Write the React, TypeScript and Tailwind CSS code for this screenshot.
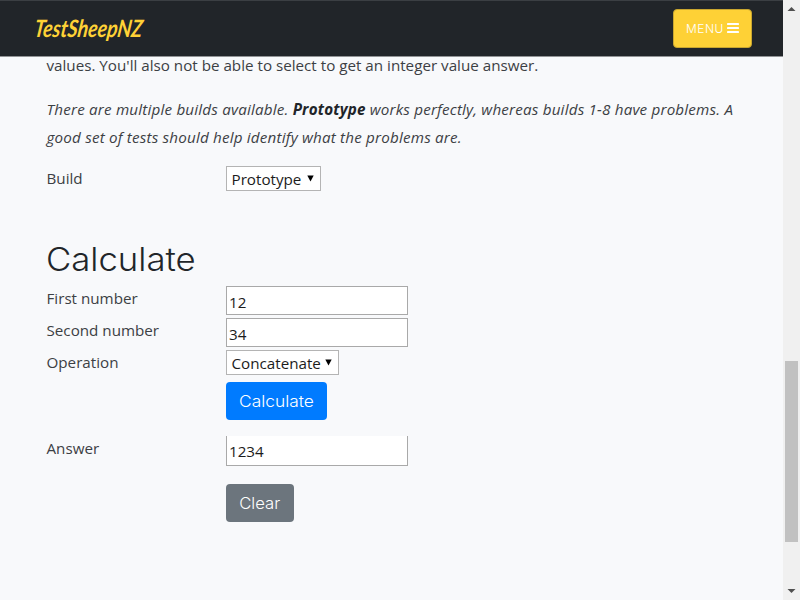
import type { ReactNode } from 'react';

const bodyFont = "font-['Open_Sans','Noto_Sans',sans-serif]";
const headingFont = "font-['Inter',sans-serif]";

function Row({ label, className, children }: { label?: string; className: string; children: ReactNode }) {
  return (
    <div className={`flex items-start ${className}`}>
      <div className="w-[179.5px] shrink-0 leading-6">{label}</div>
      {children}
    </div>
  );
}

function Select({ value, className }: { value: string; className: string }) {
  return (
    <button className={`flex h-[25px] items-center justify-between border border-[#b4b4b4] bg-white pr-[6px] pl-[4.5px] text-[#1c1c1c] ${className}`}>
      <span className="pt-px">{value}</span>
      <svg width="7" height="7" viewBox="0 0 7 7">
        <path d="M0.3 0.5h6.4L3.5 6.5z" fill="#000" />
      </svg>
    </button>
  );
}

function Field({ value, className }: { value: string; className: string }) {
  return (
    <input
      defaultValue={value}
      className={`w-[182px] border border-[#a9a9a9] bg-white pl-[2px] text-[15.2px] text-[#1c1c1c] outline-none ${className}`}
    />
  );
}

export default function App() {
  return (
    <div className={`flex h-[600px] w-[800px] overflow-hidden bg-[#f8f9fb] text-[15.2px] text-[#3c4044] ${bodyFont}`}>
      <div className="flex w-[783px] flex-col">
        <header className="z-10 flex h-[57px] shrink-0 items-center justify-between border-t border-b border-t-[#3b3f43] border-b-[#929496] bg-[#212529] pr-[31px] pl-[34px]">
          <svg width="112" height="34" viewBox="0 0 112 34" className="overflow-visible">
            <text
              x="3"
              y="25"
              textLength="108"
              lengthAdjust="spacingAndGlyphs"
              transform="skewX(-8)"
              fill="#fed136"
              className="font-['Lato',sans-serif] text-[24px] font-bold italic"
            >
              TestSheepNZ
            </text>
          </svg>
          <button className={`flex h-[39px] w-[79px] items-center justify-center rounded-[4px] border border-[#c9a62f] bg-[#fed136] text-[12px] font-light text-white ${headingFont}`}>
            <span className="tracking-[0.5px]">MENU</span>
            <svg width="12" height="10" viewBox="0 0 12 10" className="mb-[2px] ml-[3px]" fill="#fff">
              <rect width="12" height="2" rx="0.4" />
              <rect y="4" width="12" height="2" rx="0.4" />
              <rect y="8" width="12" height="2" rx="0.4" />
            </svg>
          </button>
        </header>
        <main className="-mt-[6px] pl-[46.5px]">
          <p className="leading-7 whitespace-nowrap">values. You'll also not be able to select to get an integer value answer.</p>
          <p className="mt-4 leading-7 tracking-[0.19px] whitespace-nowrap italic">
            There are multiple builds available. <b className="font-bold text-[#212529]">Prototype</b> works perfectly, whereas builds 1-8 have problems. A<br />
            good set of tests should help identify what the problems are.
          </p>
          <Row label="Build" className="mt-[15px] h-[73px]">
            <Select value="Prototype" className="w-[95px]" />
          </Row>
          <h2 className={`-ml-px h-[47px] w-fit origin-left scale-x-[1.085] pt-px text-[32px] leading-[40px] font-light text-[#212529] ${headingFont}`}>Calculate</h2>
          <Row label="First number" className="h-8">
            <Field value="12" className="h-[29px] pt-[3px]" />
          </Row>
          <Row label="Second number" className="h-8">
            <Field value="34" className="h-[29px] pt-[3px]" />
          </Row>
          <Row label="Operation" className="h-8">
            <Select value="Concatenate" className="w-[113px]" />
          </Row>
          <Row className="h-[54px]">
            <button className={`h-[38px] w-[101px] rounded-[4px] bg-[#007bff] text-[16px] font-light text-white ${headingFont}`}>
              <span className="inline-block scale-x-[1.085]">Calculate</span>
            </button>
          </Row>
          <Row label="Answer" className="h-12">
            <Field value="1234" className="h-[30px] border-t-0 pt-px" />
          </Row>
          <Row className="h-[38px]">
            <button className={`h-[38px] w-[68px] rounded-[4px] bg-[#6c757d] text-[16px] font-light text-white ${headingFont}`}>
              <span className="inline-block scale-x-[1.04]">Clear</span>
            </button>
          </Row>
        </main>
      </div>
      <div className="flex w-[17px] flex-col items-center bg-[#f0f0f0]">
        <svg width="17" height="17" viewBox="0 0 17 17" fill="#505050"><path d="M4.5 11h8L8.500 7z" /></svg>
        <div className="mt-[344px] mr-px h-[181px] w-[13px] bg-[#c1c1c1]" />
        <svg width="17" height="17" viewBox="0 0 17 17" fill="#505050" className="mt-auto"><path d="M4.500 6h8L8.500 10z" /></svg>
      </div>
    </div>
  );
}
